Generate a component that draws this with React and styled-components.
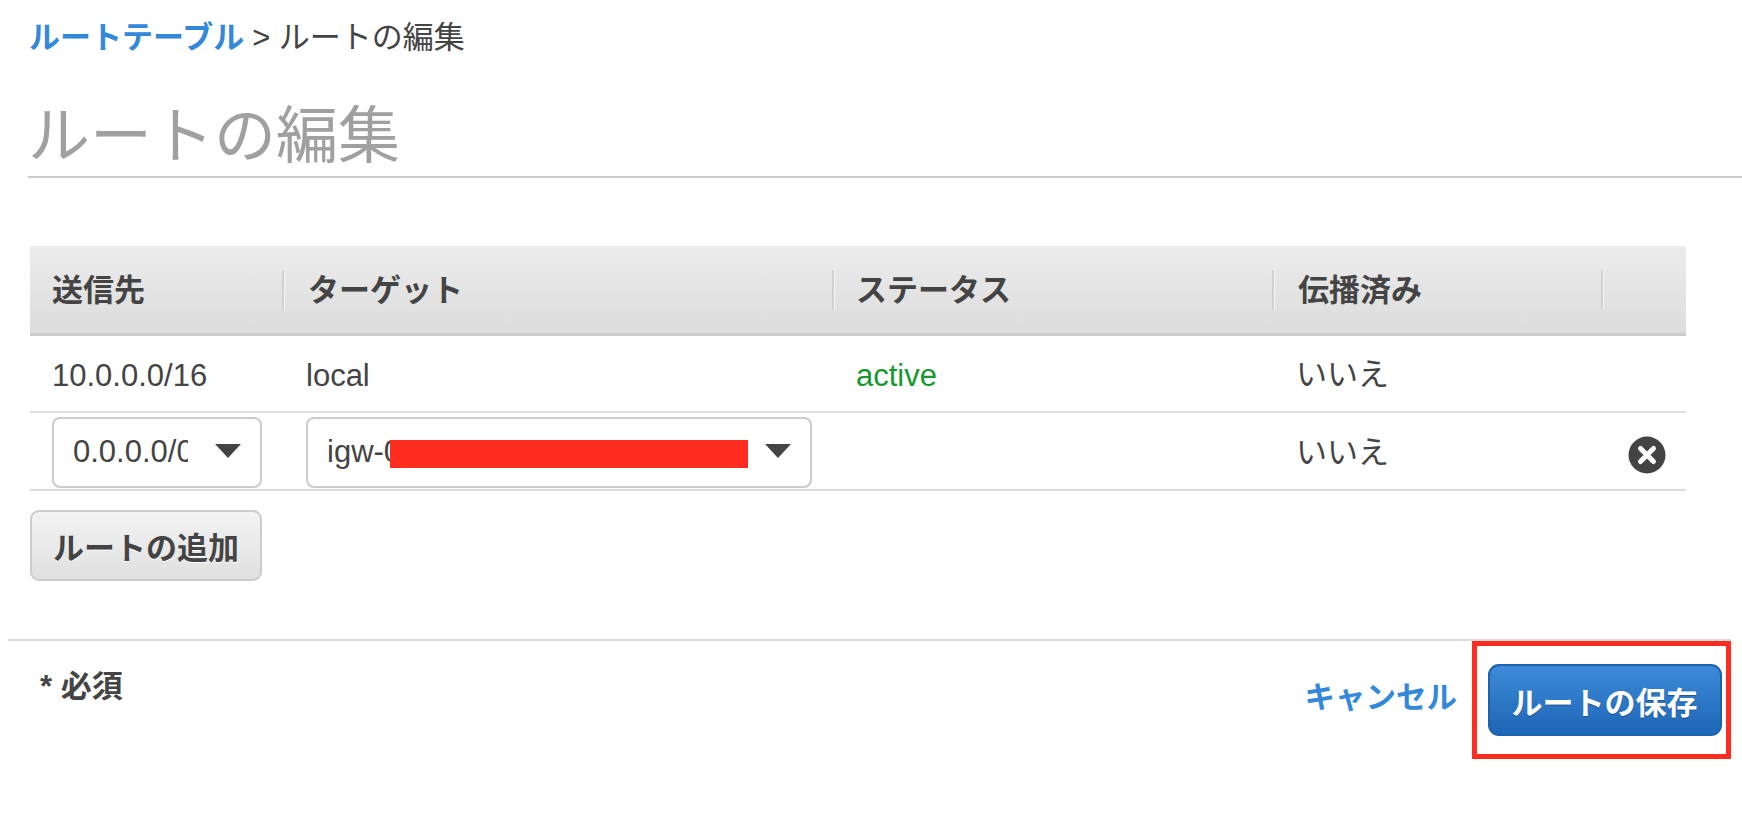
import styled, { createGlobalStyle } from "styled-components";

const GlobalStyle = createGlobalStyle`
  html, body {
    margin: 0;
    padding: 0;
    background: #fff;
  }
  body {
    font-family: "Liberation Sans", "Noto Sans CJK JP", sans-serif;
    font-size: 31px;
    color: #444;
  }
  * {
    box-sizing: border-box;
  }
`;

const COLUMNS = "254px 550px 440px 329px 83px";

const Page = styled.div`
  width: 1742px;
  height: 836px;
  overflow: hidden;
`;

const Breadcrumb = styled.div`
  display: flex;
  align-items: center;
  gap: 8px;
  height: 68px;
  padding-left: 29px;
`;

const BlueLink = styled.a`
  color: #3488da;
  font-weight: 700;
  cursor: pointer;
`;

const Title = styled.h1`
  display: flex;
  align-items: center;
  height: 110px;
  margin: 0 0 0 28px;
  padding-top: 18px;
  border-bottom: 2px solid #ccc;
  color: #a0a0a0;
  font-size: 62px;
  font-weight: 400;
`;

const Table = styled.div`
  width: 1656px;
  margin: 68px 0 0 30px;
`;

const HeaderRow = styled.div`
  display: grid;
  grid-template-columns: ${COLUMNS};
  align-items: center;
  height: 90px;
  border-bottom: 3px solid #ccc;
  background: linear-gradient(#ececec, #dcdcdc);
`;

const HeaderCell = styled.div`
  display: flex;
  align-items: center;
  height: 40px;
  padding-left: ${(props) => props.$pad || 22}px;
  padding-bottom: 4px;
  border-right: 2px solid #d0d0d0;
  box-shadow: 1px 0 0 #f6f6f6;
  font-weight: 700;
  &:last-child {
    border-right: 0;
    box-shadow: none;
  }
`;

const Row = styled.div`
  display: grid;
  grid-template-columns: ${COLUMNS};
  align-items: center;
  height: ${(props) => props.$height}px;
  border-bottom: 2px solid #ddd;
`;

const Cell = styled.div`
  padding-left: ${(props) => props.$pad || 22}px;
`;

const TextCell = styled(Cell)`
  padding-top: 4px;
`;

const PropagatedCell = styled(Cell)`
  margin-top: -4px;
`;

const Status = styled(TextCell)`
  color: #15992f;
`;

const Select = styled.div`
  display: flex;
  align-items: center;
  justify-content: space-between;
  width: ${(props) => props.$width}px;
  height: 71px;
  margin-top: 2px;
  padding: 0 19px 0 19px;
  border: 2px solid #ccc;
  border-radius: 8px;
  background: #fff;
`;

const SelectValue = styled.div`
  display: flex;
  align-items: center;
  width: ${(props) => props.$width}px;
  overflow: hidden;
  white-space: nowrap;
`;

const Redaction = styled.span`
  flex: none;
  width: 358px;
  height: 28px;
  margin: 3px 0 0 -11px;
  background: #ff2d20;
`;

const Arrow = styled.span`
  flex: none;
  width: 0;
  height: 0;
  margin-top: -3px;
  border-left: 13px solid transparent;
  border-right: 13px solid transparent;
  border-top: 14px solid #444;
`;

const RemoveCell = styled.div`
  display: flex;
  justify-content: flex-end;
  padding: 8px 20px 0 0;
`;

const AddButton = styled.button`
  display: block;
  width: 232px;
  height: 71px;
  margin: 19px 0 0 30px;
  padding: 0;
  border: 2px solid #ccc;
  border-radius: 9px;
  background: linear-gradient(#f3f3f3, #e0e0e0);
  color: #444;
  font: inherit;
  font-weight: 700;
  text-shadow: 0 1px 0 #fff;
`;

const Footer = styled.div`
  display: flex;
  justify-content: space-between;
  height: 120px;
  margin: 58px 11px 0 8px;
  border-top: 2px solid #ddd;
`;

const Required = styled.div`
  margin: 20px 0 0 32px;
  font-weight: 700;
`;

const FooterActions = styled.div`
  display: flex;
  align-items: center;
`;

const Cancel = styled(BlueLink)`
  margin: 0 15px 10px 0;
  font-size: 30.5px;
`;

const Highlight = styled.div`
  display: flex;
  align-items: center;
  justify-content: center;
  width: 259px;
  height: 118px;
  padding-left: 6px;
  border: 5px solid #ff2d20;
`;

const SaveButton = styled.button`
  width: 234px;
  height: 72px;
  padding: 0;
  border: 2px solid #1c62ae;
  border-radius: 11px;
  background: linear-gradient(#3c8ad8, #1e66b6);
  color: #fff;
  font: inherit;
  font-weight: 700;
  text-shadow: 0 1px 1px rgba(0, 0, 0, 0.3);
`;

const RemoveIcon = () => (
  <svg width="38" height="38" viewBox="0 0 38 38">
    <circle cx="19" cy="19" r="18.5" fill="#444" />
    <path
      d="M12.5 12.5 L25.5 25.5 M25.5 12.5 L12.5 25.5"
      stroke="#fff"
      strokeWidth="5"
      strokeLinecap="round"
    />
  </svg>
);

const App = () => {
  return (
    <Page>
      <GlobalStyle />
      <Breadcrumb>
        <BlueLink>ルートテーブル</BlueLink>
        <span>&gt; ルートの編集</span>
      </Breadcrumb>
      <Title>ルートの編集</Title>
      <Table>
        <HeaderRow>
          <HeaderCell>送信先</HeaderCell>
          <HeaderCell $pad={24}>ターゲット</HeaderCell>
          <HeaderCell>ステータス</HeaderCell>
          <HeaderCell $pad={24}>伝播済み</HeaderCell>
          <HeaderCell />
        </HeaderRow>
        <Row $height={77}>
          <TextCell>10.0.0.0/16</TextCell>
          <TextCell>local</TextCell>
          <Status>active</Status>
          <PropagatedCell>いいえ</PropagatedCell>
          <div />
        </Row>
        <Row $height={78}>
          <Cell>
            <Select $width={210}>
              <SelectValue $width={115}>0.0.0.0/0</SelectValue>
              <Arrow />
            </Select>
          </Cell>
          <Cell>
            <Select $width={506}>
              <SelectValue $width={426}>
                igw-0
                <Redaction />
              </SelectValue>
              <Arrow />
            </Select>
          </Cell>
          <div />
          <PropagatedCell>いいえ</PropagatedCell>
          <RemoveCell>
            <RemoveIcon />
          </RemoveCell>
        </Row>
      </Table>
      <AddButton>ルートの追加</AddButton>
      <Footer>
        <Required>* 必須</Required>
        <FooterActions>
          <Cancel>キャンセル</Cancel>
          <Highlight>
            <SaveButton>ルートの保存</SaveButton>
          </Highlight>
        </FooterActions>
      </Footer>
    </Page>
  );
};

export default App;
